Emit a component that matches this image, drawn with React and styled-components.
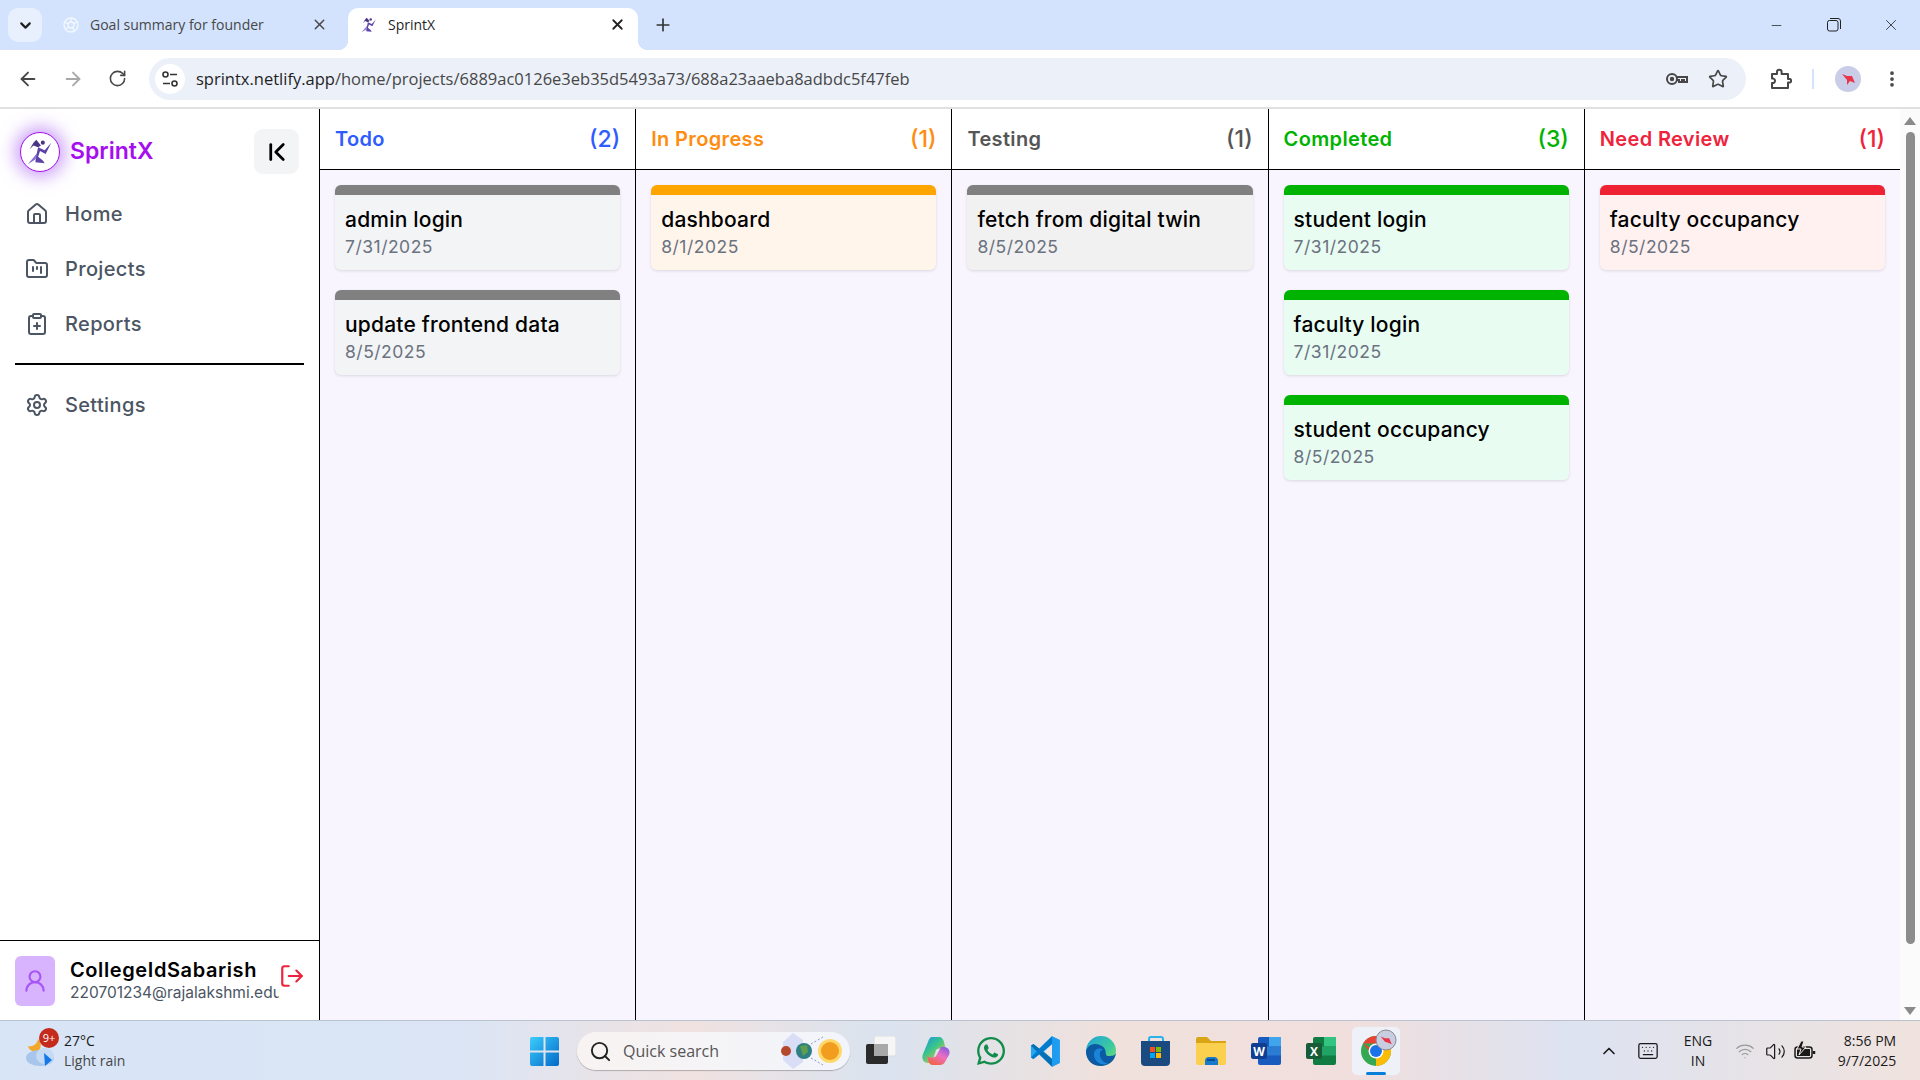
import React from 'react';
import styled, { createGlobalStyle } from 'styled-components';
import {
  ArrowLeft, ArrowRight, ChevronDown, ChevronFirst, ChevronUp, ClipboardPlus, EllipsisVertical,
  FolderKanban, House, Keyboard, LogOut, Minus, Plus, RotateCw, Search, Settings, Star,
  UserRound, Volume2, Wifi, X,
} from 'lucide-react';
import { FaWhatsapp } from 'react-icons/fa';

const UI_FONT = '"Open Sans", "Noto Sans", sans-serif';

const GlobalStyle = createGlobalStyle`
  html, body { margin: 0; padding: 0; height: 100%; overflow: hidden; }
  body { font-family: Inter, sans-serif; background: #fff; }
  #root { height: 100%; }
  * { box-sizing: border-box; }
`;

const Screen = styled.div`
  display: flex;
  flex-direction: column;
  height: 1080px;
  width: 1920px;
`;

/* ---- browser chrome ---- */
const TabStrip = styled.div`
  height: 50px;
  display: flex;
  align-items: flex-end;
  background: #d3e3fd;
  font-family: ${UI_FONT};
`;

const TabListButton = styled.div`
  width: 34px;
  height: 34px;
  margin: 0 8px 8px 8px;
  border-radius: 10px;
  background: #e8f0fe;
  display: flex;
  align-items: center;
  justify-content: center;
  color: #1f1f1f;
`;

const Tab = styled.div`
  position: relative;
  width: 290px;
  height: 42px;
  padding: 0 12px 9px;
  margin-right: ${p => p.$gap || 0}px;
  display: flex;
  align-items: center;
  gap: 10px;
  border-radius: 10px 10px 0 0;
  background: ${p => (p.$active ? '#fff' : 'transparent')};
  color: ${p => (p.$active ? '#1f1f1f' : '#474747')};
  font-size: 14px;

  ${p => p.$active && `
    &::before, &::after {
      content: '';
      position: absolute;
      bottom: 0;
      width: 10px;
      height: 10px;
    }
    &::before { left: -10px; background: radial-gradient(circle at 0 0, transparent 10px, #fff 10.5px); }
    &::after { right: -10px; background: radial-gradient(circle at 100% 0, transparent 10px, #fff 10.5px); }
  `}
`;

const TabTitle = styled.span`
  flex: 1;
`;

const NewTab = styled.div`
  width: 34px;
  height: 34px;
  margin: 0 0 8px 8px;
  display: flex;
  align-items: center;
  justify-content: center;
  color: #333;
`;

const WindowButtons = styled.div`
  margin-left: auto;
  align-self: stretch;
  padding-right: 1px;
  display: flex;
  align-items: center;
  color: #222;
`;

const WindowButton = styled.div`
  width: 57px;
  display: flex;
  justify-content: center;
`;

const Toolbar = styled.div`
  height: 59px;
  display: flex;
  align-items: center;
  background: #fff;
  border-radius: 10px 10px 0 0;
  border-bottom: 2px solid #e0e0e0;
  padding: 0 18px 0 5px;
  color: #474747;
`;

const NavButton = styled.div`
  width: 45px;
  display: flex;
  justify-content: center;
  color: ${p => (p.$disabled ? '#a8a8a8' : '#474747')};
`;

const Omnibox = styled.div`
  width: 1597px;
  height: 42px;
  margin-left: 9px;
  padding: 0 18px 0 6px;
  display: flex;
  align-items: center;
  border-radius: 21px;
  background: #ebf0f9;
`;

const SiteInfo = styled.div`
  width: 30px;
  height: 30px;
  margin-right: 11px;
  border-radius: 50%;
  background: #fff;
  display: flex;
  align-items: center;
  justify-content: center;
`;

const Url = styled.div`
  flex: 1;
  font-family: ${UI_FONT};
  font-size: 16.5px;
  color: #1f1f1f;
  span { color: #474747; }
`;

const OmniIcons = styled.div`
  display: flex;
  align-items: center;
  gap: 19px;
`;

const ToolbarEnd = styled.div`
  display: flex;
  align-items: center;
  margin-left: 24px;
  flex: 1;
`;

const ToolbarSep = styled.div`
  width: 2px;
  height: 20px;
  margin: 0 21px 0 20px;
  background: #d3e3fd;
`;

const ProfileDot = styled.div`
  width: 26px;
  height: 26px;
  border-radius: 50%;
  background: #c9cde8;
  display: flex;
  align-items: center;
  justify-content: center;
`;

/* ---- app ---- */
const AppArea = styled.div`
  flex: 1;
  min-height: 0;
  display: flex;
`;

const Sidebar = styled.aside`
  width: 320px;
  display: flex;
  flex-direction: column;
  background: #fff;
  border-right: 1.5px solid #000;
`;

const SideHeader = styled.div`
  display: flex;
  align-items: center;
  padding: 20px 20px 0 20px;
  margin-bottom: 12px;
`;

const LogoCircle = styled.div`
  width: 40px;
  height: 40px;
  border-radius: 50%;
  border: 1.5px solid #a50ff0;
  background: #fff;
  box-shadow: 0 0 18px 4px rgba(150, 60, 240, 0.55);
  display: flex;
  align-items: center;
  justify-content: center;
`;

const Brand = styled.div`
  margin-left: 10px;
  padding-bottom: 2px;
  flex: 1;
  font-size: 23px;
  font-weight: 600;
  color: #a50ff0;
`;

const CollapseButton = styled.div`
  width: 45px;
  height: 45px;
  border-radius: 9px;
  background: #f3f4f6;
  display: flex;
  align-items: center;
  justify-content: center;
  color: #000;
`;

const NavItem = styled.div`
  height: 55px;
  padding-left: 25px;
  display: flex;
  align-items: center;
  gap: 16px;
  font-size: 20px;
  font-weight: 500;
  color: #4b5563;
  letter-spacing: 0.35px;
`;

const Divider = styled.div`
  height: 1.5px;
  margin: 12px 15px 13px;
  background: #000;
`;

const UserBar = styled.div`
  margin-top: auto;
  height: 80px;
  padding: 15px 0 0 15px;
  display: flex;
  border-top: 1.5px solid #000;
`;

const Avatar = styled.div`
  flex: none;
  width: 40px;
  height: 50px;
  border-radius: 6px;
  background: #d8b4fe;
  color: #a855f7;
  display: flex;
  align-items: center;
  justify-content: center;
`;

const UserText = styled.div`
  width: 209px;
  margin-left: 15px;
  padding-top: 1px;
  overflow: hidden;
  white-space: nowrap;
`;

const UserName = styled.div`
  font-size: 20px;
  line-height: 26px;
  font-weight: 600;
  color: #000;
  letter-spacing: 0.6px;
`;

const UserMail = styled.div`
  font-size: 15.5px;
  line-height: 20px;
  color: #4b5563;
`;

const LogoutIcon = styled.div`
  margin: 7px 0 0 0;
  color: #ef233c;
`;

const Board = styled.main`
  flex: 1;
  display: flex;
  min-width: 0;
`;

const Column = styled.section`
  flex: 1;
  min-width: 0;
  display: flex;
  flex-direction: column;
  background: #f9f5ff;
  & + & { border-left: 1.5px solid #000; }
`;

const ColumnHead = styled.header`
  height: 61px;
  padding: 0 15px;
  display: flex;
  align-items: center;
  justify-content: space-between;
  background: #fff;
  border-bottom: 1.5px solid #000;
  color: ${p => p.$color};
`;

const ColumnTitle = styled.h2`
  margin: 0;
  font-size: 20px;
  font-weight: 600;
  letter-spacing: 0.35px;
`;

const ColumnCount = styled.span`
  font-size: 23px;
  font-weight: 500;
`;

const CardList = styled.div`
  display: flex;
  flex-direction: column;
  gap: 20px;
  padding: 15px;
`;

const Card = styled.article`
  height: 85px;
  padding: 10px 10px 0;
  border-top: 10px solid ${p => p.$bar};
  border-radius: 6px;
  background: ${p => p.$bg};
  box-shadow: 0 1px 3px rgba(0, 0, 0, 0.12);
`;

const CardTitle = styled.div`
  font-size: 21px;
  line-height: 30px;
  font-weight: 500;
  color: #000;
  letter-spacing: 0.2px;
`;

const CardDate = styled.div`
  font-size: 17.5px;
  line-height: 24px;
  color: #6b7280;
  letter-spacing: 0.5px;
`;

const PageScroll = styled.div`
  width: 20px;
  display: flex;
  flex-direction: column;
  align-items: center;
  background: #fbfbfb;
  padding: 8px 0 5px;
`;

const ScrollArrow = styled.div`
  width: 0;
  height: 0;
  border-left: 6px solid transparent;
  border-right: 6px solid transparent;
  ${p => (p.$down ? 'border-top: 8px solid #8a8a8a;' : 'border-bottom: 8px solid #8a8a8a;')}
`;

const ScrollThumb = styled.div`
  width: 9px;
  height: 812px;
  margin: 7px 0 auto;
  border-radius: 5px;
  background: #8c8c8c;
`;

/* ---- windows taskbar ---- */
const Taskbar = styled.footer`
  height: 60px;
  display: grid;
  grid-template-columns: 530px 1fr auto;
  align-items: center;
  border-top: 1px solid #b9c2cf;
  background: linear-gradient(90deg, #d8e5f7 0%, #dbe5f5 24%, #f0e2e0 36%, #dae3ef 46%, #f0e1dc 58%, #f1dfdd 70%, #dde3f1 82%, #f0e3de 100%);
  font-family: ${UI_FONT};
  color: #1a1a1a;
`;

const Weather = styled.div`
  display: flex;
  align-items: center;
  padding-left: 25px;
`;

const WeatherIcon = styled.div`
  position: relative;
  width: 34px;
  height: 38px;
  margin-right: 5px;
`;

const WeatherBadge = styled.span`
  position: absolute;
  left: 14px;
  top: -4px;
  width: 20px;
  height: 20px;
  border-radius: 50%;
  background: #c42b1c;
  color: #fff;
  font-size: 11px;
  line-height: 20px;
  text-align: center;
`;

const TwoLines = styled.div`
  font-size: 14px;
  line-height: 20px;
  text-align: ${p => p.$align || 'left'};
  small { font-size: 14px; color: #474747; display: block; }
`;

const CenterGroup = styled.div`
  display: flex;
  align-items: center;
`;

const SearchPill = styled.div`
  width: 273px;
  height: 38px;
  margin: 0 3px 0 18px;
  padding: 0 5px 0 12px;
  display: flex;
  align-items: center;
  gap: 11px;
  border-radius: 19px;
  background: linear-gradient(90deg, #f8f3f2, #f2f5fb);
  box-shadow: 0 1px 1px rgba(0, 0, 0, 0.25);
  color: #555;
  font-size: 16px;
`;

const SearchLabel = styled.span`
  flex: 1;
`;

const TaskCell = styled.div`
  width: 55px;
  height: 60px;
  display: flex;
  align-items: center;
  justify-content: center;
`;

const ChromeBox = styled.div`
  position: relative;
  width: 48px;
  height: 48px;
  border-radius: 5px;
  background: #eef1f8;
  display: flex;
  align-items: center;
  justify-content: center;
`;

const RunningBar = styled.span`
  position: absolute;
  left: 14px;
  bottom: 0;
  width: 20px;
  height: 3px;
  border-radius: 2px;
  background: #0a7fd9;
`;

const Tray = styled.div`
  display: flex;
  align-items: center;
  padding-right: 16px;
  color: #1a1a1a;
`;

const TrayCell = styled.div`
  width: ${p => p.$w}px;
  margin-left: ${p => p.$ml || 0}px;
  display: flex;
  justify-content: center;
  color: ${p => p.$color || 'inherit'};
`;

/* ---- drawings ---- */
const RunnerLogo = ({ size = 30 }) => (
  <svg width={size} height={size} viewBox="0 0 32 32">
    <path d="M3 29 L13 17 L11 24 Z" fill="#8a6fd0" />
    <path d="M12 3 L17 9 L14 11 L9 9 L5 13 L9 6 Z" fill="#4a3585" />
    <path d="M14 11 L21 14 L28 6 L22 18 L16 15 L14 21 L19 25 L21 28 L11 27 L12 20 Z" fill="#5d43a8" />
    <circle cx="19" cy="6" r="2.2" fill="#4a3585" />
  </svg>
);

const TuneIcon = () => (
  <svg width="20" height="20" viewBox="0 0 20 20" fill="none" stroke="#333" strokeWidth="1.6">
    <circle cx="5.5" cy="5.5" r="2.5" />
    <path d="M10 5.5h7M3 14.5h7" />
    <circle cx="14.5" cy="14.5" r="2.5" />
  </svg>
);

const KeyIcon = () => (
  <svg width="24" height="16" viewBox="0 0 24 16" fill="none" stroke="#474747" strokeWidth="2">
    <circle cx="7" cy="8" r="5" />
    <circle cx="7" cy="8" r="1.2" fill="#474747" />
    <path d="M12 6h10v5h-3V9h-2v2h-3V9h-2" />
  </svg>
);

const ExtensionIcon = () => (
  <svg width="22" height="22" viewBox="0 0 22 22" fill="none" stroke="#474747" strokeWidth="2" strokeLinejoin="round">
    <path d="M2 6h5V4a2.3 2.3 0 0 1 4.6 0v2H18v5h2a2 2 0 0 1 0 3.6h-2V20H2v-5h1.6a2.4 2.4 0 0 0 0-4.4H2Z" />
  </svg>
);

const RestoreIcon = () => (
  <svg width="14" height="14" viewBox="0 0 14 14" fill="none" stroke="#222" strokeWidth="1">
    <rect x="0.5" y="2.5" width="10.5" height="10.5" rx="2" />
    <path d="M3 .5h8a2.5 2.5 0 0 1 2.5 2.5v8" />
  </svg>
);

const BirdIcon = ({ size = 16 }) => (
  <svg width={size} height={size} viewBox="0 0 16 16">
    <path d="M2 3 L7 5 L12 5 L15 12 L10 10 L7 14 L7 9 Z" fill="#e9344a" />
  </svg>
);

const KnotFavicon = () => (
  <svg width="18" height="18" viewBox="0 0 18 18" fill="none" stroke="#f4f8ff" strokeWidth="1.3">
    <circle cx="9" cy="9" r="7" />
    <circle cx="9" cy="9" r="3" />
    <path d="M9 2v4M3 6l3 2M3 13l4-2M12 15l-1-4M15 6l-4 2" />
  </svg>
);

const CloudIcon = () => (
  <svg width="34" height="38" viewBox="0 0 34 38">
    <path d="M3 14 C7 15 12 13 13 7 C17 11 17 18 11 20 C8 20 4 18 3 14 Z" fill="#f3a82c" />
    <ellipse cx="15" cy="26" rx="14" ry="8" fill="#a8c6ec" />
    <ellipse cx="20" cy="24" rx="9" ry="8" fill="#c5daf4" />
    <path d="M19 21 L27 28 L20 34 Z" fill="#1479e8" />
  </svg>
);

const WindowsLogo = () => (
  <svg width="29" height="29" viewBox="0 0 29 29">
    <defs>
      <linearGradient id="winGrad" x1="0" y1="0" x2="1" y2="1">
        <stop offset="0" stopColor="#3ccdfd" />
        <stop offset="1" stopColor="#0369c8" />
      </linearGradient>
    </defs>
    <path d="M2 0h11.5v13.5H0V2a2 2 0 0 1 2-2ZM15.5 0H27a2 2 0 0 1 2 2v11.5H15.5ZM0 15.5h13.5V29H2a2 2 0 0 1-2-2ZM15.5 15.5H29V27a2 2 0 0 1-2 2H15.5Z" fill="url(#winGrad)" />
  </svg>
);

const PlanetsArt = () => (
  <svg width="68" height="38" viewBox="0 0 68 38">
    <path d="M6 10 L16 1 L26 8 L26 30 L16 37 L6 28 Z" fill="#d9ddf5" />
    <circle cx="9" cy="19" r="5" fill="#b5482a" />
    <circle cx="27" cy="19" r="8" fill="#2f7f83" />
    <path d="M23 14 L30 13 L31 20 L26 24 Z" fill="#5d9e4f" />
    <path d="M34 12 L46 5M34 26 L46 33" stroke="#8c9ac0" strokeDasharray="2 2" />
    <circle cx="53" cy="19" r="12" fill="#ffd86a" />
    <circle cx="53" cy="19" r="9" fill="#f29d1f" />
  </svg>
);

const TaskViewIcon = () => (
  <svg width="30" height="30" viewBox="0 0 30 30">
    <rect x="8" y="0" width="22" height="20" rx="2" fill="#f6f6f6" stroke="#ddd" />
    <rect x="0" y="8" width="22" height="20" rx="2" fill="#2b2b2b" />
    <rect x="8" y="8" width="14" height="12" fill="#a9a9a9" />
  </svg>
);

const CopilotIcon = () => (
  <svg width="30" height="30" viewBox="0 0 30 30">
    <defs>
      <linearGradient id="copA" x1="0" y1="0" x2="0.8" y2="1">
        <stop offset="0" stopColor="#1f8fe8" />
        <stop offset="0.45" stopColor="#35c48d" />
        <stop offset="1" stopColor="#f2c53a" />
      </linearGradient>
      <linearGradient id="copB" x1="0.2" y1="1" x2="0.8" y2="0">
        <stop offset="0" stopColor="#f0623a" />
        <stop offset="0.55" stopColor="#ee6fc0" />
        <stop offset="1" stopColor="#8a5be0" />
      </linearGradient>
    </defs>
    <path d="M11 1h7c3 0 4 2 5 5l2 9c-3-3-7-3-10-1L11 27H7c-4 0-7-4-5-9L7 6c1-3 2-5 4-5Z" fill="url(#copA)" />
    <path d="M19 29h-7c-3 0-4-2-5-5l-1-4c3 2 7 2 9 0l5-9h3c4 0 7 4 5 8l-4 7c-1 2-3 3-5 3Z" fill="url(#copB)" />
  </svg>
);

const VsCodeIcon = () => (
  <svg width="31" height="31" viewBox="0 0 100 100">
    <path d="M71 99 L96 87 V13 L71 1 L29 40 L11 26 L3 31 V69 L11 74 L29 60 Z" fill="#22a7f0" />
    <path d="M71 1 L96 13 V87 L71 99 Z" fill="#1f9cf0" />
    <path d="M3 31 L11 26 L71 73 V99 Z" fill="#0065a9" opacity="0.85" />
    <path d="M3 69 L11 74 L71 27 V1 Z" fill="#007acc" />
    <path d="M71 27 L45 50 L71 73 Z" fill="#f0e5e2" />
  </svg>
);

const EdgeIcon = () => (
  <svg width="30" height="30" viewBox="0 0 30 30">
    <defs>
      <linearGradient id="edgeTop" x1="0" y1="0" x2="1" y2="1">
        <stop offset="0" stopColor="#1fa3dc" />
        <stop offset="0.6" stopColor="#3ecb9c" />
        <stop offset="1" stopColor="#8ae06a" />
      </linearGradient>
    </defs>
    <circle cx="15" cy="15" r="15" fill="url(#edgeTop)" />
    <path d="M0 15 C2 8 10 6 16 10 C22 14 18 20 22 20 C25 20 29 20 30 17 C29 25 22 30 15 30 C6 30 0 24 0 15 Z" fill="#0c59a4" />
    <path d="M8 18 C8 13 14 11 17 14 C13 14 13 20 16 24 C18 27 22 28 24 27 C20 30 8 29 8 18 Z" fill="#1a84d8" />
  </svg>
);

const StoreIcon = () => (
  <svg width="30" height="30" viewBox="0 0 30 30">
    <path d="M8 5V3a2 2 0 0 1 2-2h10a2 2 0 0 1 2 2v2" fill="none" stroke="#2bb2ea" strokeWidth="2" />
    <path d="M0 5h29v21a4 4 0 0 1-4 4H4a4 4 0 0 1-4-4Z" fill="#1a4a80" />
    <rect x="9" y="11" width="5" height="5" fill="#f25022" />
    <rect x="15" y="11" width="5" height="5" fill="#7fba00" />
    <rect x="9" y="17" width="5" height="5" fill="#00a4ef" />
    <rect x="15" y="17" width="5" height="5" fill="#ffb900" />
  </svg>
);

const FolderIcon = () => (
  <svg width="30" height="28" viewBox="0 0 30 28">
    <path d="M0 2a2 2 0 0 1 2-2h9l4 4h15v6H0Z" fill="#d9a514" />
    <path d="M0 6h30v20a2 2 0 0 1-2 2H2a2 2 0 0 1-2-2Z" fill="#fbd04e" />
    <path d="M9 28v-5a4 4 0 0 1 4-3h6a4 4 0 0 1 3 3v5Z" fill="#1679c9" />
    <rect x="11" y="22" width="8" height="2" fill="#0b4d8c" />
  </svg>
);

const OfficeIcon = ({ letter, tileA, tileB, tileC, tileD }) => (
  <svg width="30" height="28" viewBox="0 0 30 28">
    <rect x="7" y="0" width="23" height="28" rx="2" fill={tileB} />
    <rect x="18" y="0" width="12" height="9.5" fill={tileA} />
    <rect x="7" y="9.5" width="23" height="9" fill={tileC} />
    <rect x="0" y="6" width="16" height="16" rx="2" fill={tileD} />
    <text x="8" y="18.5" fontFamily="Open Sans, sans-serif" fontSize="12" fontWeight="700" fill="#fff" textAnchor="middle">{letter}</text>
  </svg>
);

const ChromeIcon = () => (
  <svg width="48" height="48" viewBox="0 0 48 48">
    <g transform="translate(9 9)">
      <circle cx="15" cy="15" r="15" fill="#34a853" />
      <path d="M15 15 L28 7.5 A15 15 0 0 1 15 30 Z" fill="#fbbc05" />
      <path d="M2 7.5 A15 15 0 0 1 28 7.5 L15 7.5 Z M2 7.5 L15 15 L8 15 Z" fill="#ea4335" />
      <circle cx="15" cy="15" r="7.5" fill="#fff" />
      <circle cx="15" cy="15" r="6" fill="#1a73e8" />
    </g>
    <circle cx="34" cy="13" r="10" fill="#c9cde0" stroke="#8a8a96" />
    <g transform="translate(27 7) scale(0.85)">
      <path d="M2 3 L7 5 L12 5 L15 12 L10 10 L7 9 Z" fill="#e9344a" />
    </g>
  </svg>
);

const BatteryIcon = () => (
  <svg width="22" height="22" viewBox="0 0 22 22" fill="none" stroke="#1a1a1a" strokeWidth="1.5">
    <rect x="1" y="7" width="17" height="11" rx="2.5" />
    <path d="M20 11v3" strokeWidth="2.5" />
    <rect x="3" y="9" width="13" height="7" fill="#1a1a1a" stroke="none" />
    <path d="M7 1 L3 9 H7 L5 15 L12 7 H8 L10 1 Z" fill="#1a1a1a" stroke="#efe3df" strokeWidth="1" />
  </svg>
);

const columns = [
  {
    title: 'Todo', color: '#2f5cff', bar: '#808080', bg: '#f3f4f6',
    tasks: [['admin login', '7/31/2025'], ['update frontend data', '8/5/2025']],
  },
  {
    title: 'In Progress', color: '#ff8c0f', bar: '#ffa500', bg: '#fff5eb',
    tasks: [['dashboard', '8/1/2025']],
  },
  {
    title: 'Testing', color: '#555555', bar: '#808080', bg: '#f1f1f1',
    tasks: [['fetch from digital twin', '8/5/2025']],
  },
  {
    title: 'Completed', color: '#00b300', bar: '#00b300', bg: '#e8fcf2',
    tasks: [['student login', '7/31/2025'], ['faculty login', '7/31/2025'], ['student occupancy', '8/5/2025']],
  },
  {
    title: 'Need Review', color: '#ef233c', bar: '#ee2233', bg: '#fff1f0',
    tasks: [['faculty occupancy', '8/5/2025']],
  },
];

const navTop = [
  ['Home', House],
  ['Projects', FolderKanban],
  ['Reports', ClipboardPlus],
];

const App = () => (
  <Screen>
    <GlobalStyle />
    <TabStrip>
      <TabListButton><ChevronDown size={17} strokeWidth={3} /></TabListButton>
      <Tab $gap={8}>
        <KnotFavicon />
        <TabTitle>Goal summary for founder</TabTitle>
        <X size={17} strokeWidth={2} />
      </Tab>
      <Tab $active>
        <RunnerLogo size={18} />
        <TabTitle>SprintX</TabTitle>
        <X size={17} strokeWidth={2.5} color="#222" />
      </Tab>
      <NewTab><Plus size={20} /></NewTab>
      <WindowButtons>
        <WindowButton><Minus size={15} strokeWidth={1.2} /></WindowButton>
        <WindowButton><RestoreIcon /></WindowButton>
        <WindowButton><X size={18} strokeWidth={1.1} /></WindowButton>
      </WindowButtons>
    </TabStrip>

    <Toolbar>
      <NavButton><ArrowLeft size={22} /></NavButton>
      <NavButton $disabled><ArrowRight size={22} /></NavButton>
      <NavButton><RotateCw size={19} /></NavButton>
      <Omnibox>
        <SiteInfo><TuneIcon /></SiteInfo>
        <Url>sprintx.netlify.app<span>/home/projects/6889ac0126e3eb35d5493a73/688a23aaeba8adbdc5f47feb</span></Url>
        <OmniIcons>
          <KeyIcon />
          <Star size={20} strokeWidth={2} />
        </OmniIcons>
      </Omnibox>
      <ToolbarEnd>
        <ExtensionIcon />
        <ToolbarSep />
        <ProfileDot><BirdIcon /></ProfileDot>
        <EllipsisVertical size={20} strokeWidth={2.5} style={{ marginLeft: 'auto' }} />
      </ToolbarEnd>
    </Toolbar>

    <AppArea>
      <Sidebar>
        <SideHeader>
          <LogoCircle><RunnerLogo /></LogoCircle>
          <Brand>SprintX</Brand>
          <CollapseButton><ChevronFirst size={30} strokeWidth={2.2} /></CollapseButton>
        </SideHeader>
        {navTop.map(([label, Icon]) => (
          <NavItem key={label}><Icon size={24} strokeWidth={2} />{label}</NavItem>
        ))}
        <Divider />
        <NavItem><Settings size={24} strokeWidth={2} />Settings</NavItem>
        <UserBar>
          <Avatar><UserRound size={26} strokeWidth={2} /></Avatar>
          <UserText>
            <UserName>CollegeIdSabarish</UserName>
            <UserMail>220701234@rajalakshmi.edu.in</UserMail>
          </UserText>
          <LogoutIcon><LogOut size={26} strokeWidth={2} /></LogoutIcon>
        </UserBar>
      </Sidebar>

      <Board>
        {columns.map(col => (
          <Column key={col.title}>
            <ColumnHead $color={col.color}>
              <ColumnTitle>{col.title}</ColumnTitle>
              <ColumnCount>({col.tasks.length})</ColumnCount>
            </ColumnHead>
            <CardList>
              {col.tasks.map(([name, date]) => (
                <Card key={name} $bar={col.bar} $bg={col.bg}>
                  <CardTitle>{name}</CardTitle>
                  <CardDate>{date}</CardDate>
                </Card>
              ))}
            </CardList>
          </Column>
        ))}
      </Board>

      <PageScroll>
        <ScrollArrow />
        <ScrollThumb />
        <ScrollArrow $down />
      </PageScroll>
    </AppArea>

    <Taskbar>
      <Weather>
        <WeatherIcon>
          <CloudIcon />
          <WeatherBadge>9+</WeatherBadge>
        </WeatherIcon>
        <TwoLines>27°C<small>Light rain</small></TwoLines>
      </Weather>

      <CenterGroup>
        <WindowsLogo />
        <SearchPill>
          <Search size={23} strokeWidth={2} color="#222" />
          <SearchLabel>Quick search</SearchLabel>
          <PlanetsArt />
        </SearchPill>
        <TaskCell><TaskViewIcon /></TaskCell>
        <TaskCell><CopilotIcon /></TaskCell>
        <TaskCell><FaWhatsapp size={32} color="#128c4a" /></TaskCell>
        <TaskCell><VsCodeIcon /></TaskCell>
        <TaskCell><EdgeIcon /></TaskCell>
        <TaskCell><StoreIcon /></TaskCell>
        <TaskCell><FolderIcon /></TaskCell>
        <TaskCell><OfficeIcon letter="W" tileA="#41a5ee" tileB="#185abd" tileC="#2b7cd3" tileD="#103f91" /></TaskCell>
        <TaskCell><OfficeIcon letter="X" tileA="#33c481" tileB="#107c41" tileC="#21a366" tileD="#185c37" /></TaskCell>
        <TaskCell>
          <ChromeBox>
            <ChromeIcon />
            <RunningBar />
          </ChromeBox>
        </TaskCell>
      </CenterGroup>

      <Tray>
        <TrayCell $w={20}><ChevronUp size={20} strokeWidth={2} /></TrayCell>
        <TrayCell $w={24} $ml={17}><Keyboard size={22} strokeWidth={1.4} /></TrayCell>
        <TrayCell $w={40} $ml={18}><TwoLines $align="center">ENG<br />IN</TwoLines></TrayCell>
        <TrayCell $w={24} $ml={15} $color="#9a9a9a"><Wifi size={20} strokeWidth={1.4} /></TrayCell>
        <TrayCell $w={24} $ml={6}><Volume2 size={21} strokeWidth={1.4} /></TrayCell>
        <TrayCell $w={24} $ml={6}><BatteryIcon /></TrayCell>
        <TrayCell $w={74} $ml={13}><TwoLines $align="right">8:56 PM<br />9/7/2025</TwoLines></TrayCell>
      </Tray>
    </Taskbar>
  </Screen>
);

export default App;
